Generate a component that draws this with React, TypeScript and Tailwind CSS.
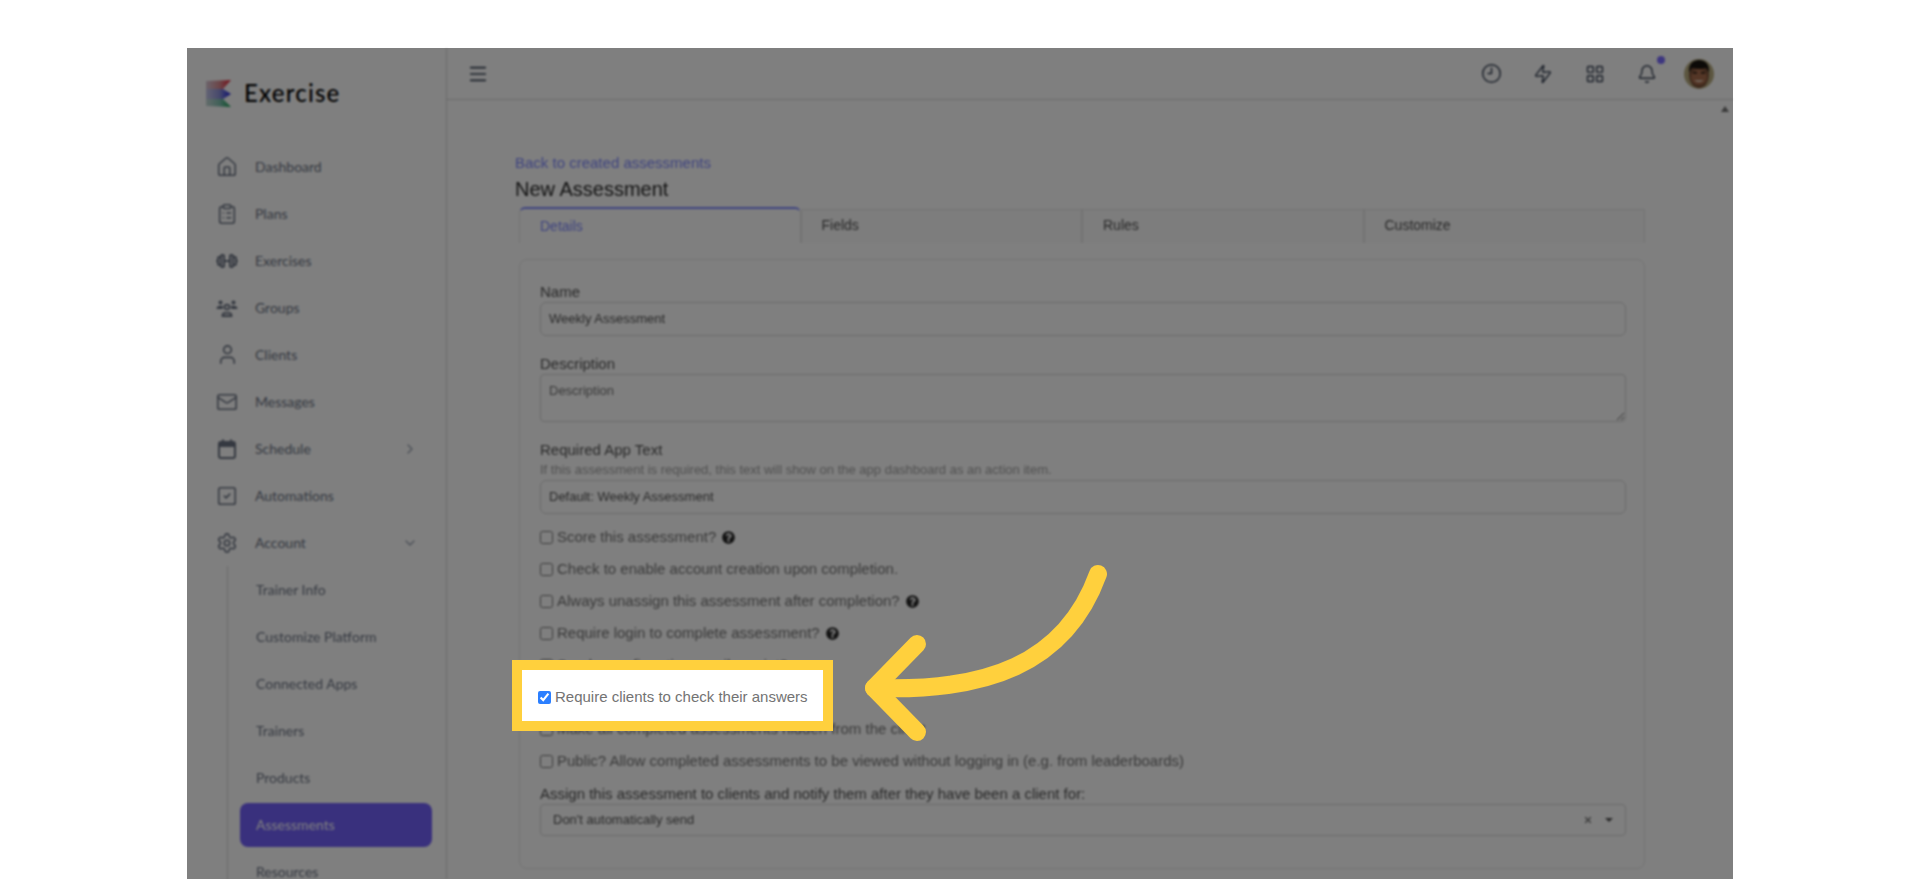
import { Bell, ChevronDown, ChevronRight, ClipboardList, Clock9, House, LayoutGrid, Mail, Menu, Settings, SquareCheck, User, X, Zap } from "lucide-react";
import { FaQuestionCircle } from "react-icons/fa";
import { TbBarbell } from "react-icons/tb";
import type { ReactNode } from "react";

function Logo() {
  return (
    <svg width="27" height="27" viewBox="0 0 27 27">
      <defs>
        <linearGradient id="lr" x1="0" x2="1" y1="0" y2="0">
          <stop offset="0" stopColor="#d8c8d8" />
          <stop offset="0.55" stopColor="#d88a90" />
          <stop offset="1" stopColor="#e81c30" />
        </linearGradient>
        <linearGradient id="lb" x1="0" x2="1" y1="0" y2="0">
          <stop offset="0" stopColor="#c8c8e8" />
          <stop offset="0.55" stopColor="#8c90d8" />
          <stop offset="1" stopColor="#1c20e0" />
        </linearGradient>
        <linearGradient id="lg" x1="0" x2="1" y1="0" y2="0">
          <stop offset="0" stopColor="#c8d8d8" />
          <stop offset="0.55" stopColor="#80c0b0" />
          <stop offset="1" stopColor="#14a050" />
        </linearGradient>
      </defs>
      <polygon points="1,1 26,0 18,9 1,9" fill="url(#lr)" />
      <polygon points="1,9 18,9 26,14 18,19 1,19" fill="url(#lb)" />
      <polygon points="1,19 18,19 26,27 1,26" fill="url(#lg)" />
    </svg>
  );
}

function GroupIcon() {
  return (
    <svg width="26" height="26" viewBox="0 0 24 24" fill="none" stroke="currentColor" strokeWidth="1.8">
      <circle cx="12" cy="11" r="2.4" />
      <path d="M7.500 20v-.5c0-1.600 1.400-2.700 3-2.700h3c1.600 0 3 1.100 3 2.700v.5z" />
      <circle cx="5.500" cy="6.500" r="2" fill="currentColor" stroke="none" />
      <circle cx="18.500" cy="6.500" r="2" fill="currentColor" stroke="none" />
      <path d="M1.500 13c0-2 1.500-3.200 4-3.200 1.300 0 2.400.3 3 1-.6.7-.9 1.400-.9 2.200z" fill="currentColor" stroke="none" />
      <path d="M22.500 13c0-2-1.500-3.200-4-3.200-1.300 0-2.400.3-3 1 .6.7.9 1.400.9 2.200z" fill="currentColor" stroke="none" />
    </svg>
  );
}

function CalendarIcon() {
  return (
    <svg width="24" height="24" viewBox="0 0 24 24" fill="none" stroke="currentColor" strokeWidth="2">
      <rect x="4" y="5" width="16" height="16" rx="2" />
      <path d="M4 7.500a2.500 2.500 0 0 1 2.500-2.500h11a2.500 2.500 0 0 1 2.500 2.500V10H4z" fill="currentColor" stroke="none" />
      <path d="M8 2.500v3M16 2.500v3" />
    </svg>
  );
}

function Avatar() {
  return (
    <svg width="30" height="30" viewBox="0 0 30 30" className="rounded-full">
      <rect width="30" height="30" fill="#b8ac80" />
      <ellipse cx="15" cy="16" rx="10" ry="13" fill="#7a5038" />
      <path d="M5 14C4 4 10 1 15 1s11 3 10 13c-1-3-2-5-4-5-3 1-8 1-12 0-2 0-3 2-4 5z" fill="#181410" />
      <ellipse cx="15" cy="18" rx="8" ry="8" fill="#a86c4c" />
      <rect x="9" y="13" width="4" height="1.500" fill="#201810" />
      <rect x="17" y="13" width="4" height="1.500" fill="#201810" />
      <path d="M10 21c3 2.500 7 2.500 10 0-2 .5-8 .5-10 0z" fill="#f0e0d0" />
    </svg>
  );
}

const rowClass = "flex h-[47px] items-center";

function NavRow({ icon, label, chevron }: { icon: ReactNode; label: string; chevron?: ReactNode }) {
  return (
    <div className={`${rowClass} gap-4 pl-7 pr-7`}>
      <span className="flex w-6 justify-center text-gray-500">{icon}</span>
      <span className="text-sm text-gray-500">{label}</span>
      {chevron && <span className="ml-auto text-gray-400">{chevron}</span>}
    </div>
  );
}

function SubRow({ label }: { label: string }) {
  return (
    <div className={`${rowClass} pl-7`}>
      <span className="text-sm text-gray-500">{label}</span>
    </div>
  );
}

function Sidebar() {
  return (
    <aside className="w-65 shrink-0 border-r border-neutral-300 font-['Lato',sans-serif]">
      <div className="-mb-px flex h-24 items-center gap-3 pb-1.5 pl-4.5">
        <Logo />
        <span className="text-2xl font-medium tracking-wider text-black">Exercise</span>
      </div>
      <NavRow icon={<House size={22} strokeWidth={1.7} />} label="Dashboard" />
      <NavRow icon={<ClipboardList size={22} strokeWidth={1.7} />} label="Plans" />
      <NavRow icon={<TbBarbell size={24} />} label="Exercises" />
      <NavRow icon={<GroupIcon />} label="Groups" />
      <NavRow icon={<User size={23} strokeWidth={1.7} />} label="Clients" />
      <NavRow icon={<Mail size={22} strokeWidth={1.7} />} label="Messages" />
      <NavRow icon={<CalendarIcon />} label="Schedule" chevron={<ChevronRight size={16} />} />
      <NavRow icon={<SquareCheck size={22} strokeWidth={1.7} />} label="Automations" />
      <NavRow icon={<Settings size={22} strokeWidth={1.7} />} label="Account" chevron={<ChevronDown size={16} />} />
      <div className="ml-10 border-l border-neutral-300">
        <SubRow label="Trainer Info" />
        <SubRow label="Customize Platform" />
        <SubRow label="Connected Apps" />
        <SubRow label="Trainers" />
        <SubRow label="Products" />
        <div className={`${rowClass} pl-3`}>
          <div className="flex h-11 w-48 items-center rounded-lg bg-[#7260fa] px-4 text-sm text-white">
            Assessments
          </div>
        </div>
        <SubRow label="Resources" />
      </div>
    </aside>
  );
}

function TopBar() {
  const cell = "relative flex h-full w-13 items-center justify-center";
  return (
    <header className="flex h-13 shrink-0 items-center border-b border-neutral-300 pl-5 pr-2 text-gray-700">
      <Menu size={22} strokeWidth={1.8} />
      <div className="ml-auto flex h-full items-center">
        <div className={cell}><Clock9 size={21} strokeWidth={1.7} /></div>
        <div className={cell}><Zap size={20} strokeWidth={1.7} className="-rotate-6" /></div>
        <div className={cell}><LayoutGrid size={20} strokeWidth={1.7} /></div>
        <div className={cell}>
          <Bell size={20} strokeWidth={1.7} />
          <span className="absolute left-9 top-2 size-2 rounded-full bg-[#7a6cff]" />
        </div>
        <div className={cell}><Avatar /></div>
      </div>
    </header>
  );
}

function CheckRow({ label, help }: { label: string; help?: boolean }) {
  return (
    <label className="flex h-8 items-center gap-1 text-[15px] text-neutral-500">
      <input type="checkbox" />
      <span>{label}</span>
      {help && <FaQuestionCircle size={13} className="ml-0.5 text-neutral-800" />}
    </label>
  );
}

const inputClass = "block h-8.5 w-full rounded-md border border-neutral-300 bg-white px-2 text-[13px] text-neutral-600 outline-none";
const labelClass = "text-[15px] leading-4 text-neutral-600";

function Form() {
  return (
    <div className="mt-4 rounded-lg border border-neutral-200 pb-8 pl-5 pr-4.5 pt-6">
      <div className={labelClass}>Name</div>
      <input readOnly defaultValue="Weekly Assessment" className={`${inputClass} mt-0.5`} />
      <div className={`${labelClass} mt-5`}>Description</div>
      <textarea
        readOnly
        placeholder="Description"
        className="mt-0.5 block h-12 w-full rounded-sm border border-neutral-300 bg-white px-2 py-1.5 text-[13px] text-neutral-600 outline-none placeholder:text-neutral-500"
      />
      <div className={`${labelClass} mt-5`}>Required App Text</div>
      <div className="mt-1 text-[13px] leading-4 text-neutral-400">
        If this assessment is required, this text will show on the app dashboard as an action item.
      </div>
      <input readOnly defaultValue="Default: Weekly Assessment" className={`${inputClass} mt-0.5`} />
      <div className="mt-2">
        <CheckRow label="Score this assessment?" help />
        <CheckRow label="Check to enable account creation upon completion." />
        <CheckRow label="Always unassign this assessment after completion?" help />
        <CheckRow label="Require login to complete assessment?" help />
        <CheckRow label="Send a confirmation email receipt?" />
        <CheckRow label="Require clients to check their answers" />
        <CheckRow label="Make all completed assessments hidden from the client" />
        <CheckRow label="Public? Allow completed assessments to be viewed without logging in (e.g. from leaderboards)" />
      </div>
      <div className={`${labelClass} mt-2`}>
        Assign this assessment to clients and notify them after they have been a client for:
      </div>
      <div className="mt-0.5 flex h-8 items-center rounded-sm border border-neutral-300 pl-3 pr-3 text-[13px] text-neutral-600">
        Don't automatically send
        <X size={10} strokeWidth={3} className="ml-auto text-neutral-500" />
        <span className="ml-3 size-0 border-x-4 border-t-4 border-x-transparent border-t-neutral-600" />
      </div>
    </div>
  );
}

function Tabs() {
  const tab = "mt-0.5 flex items-center border-x border-t border-neutral-200 bg-neutral-50 pb-0.5 pl-5 text-sm text-neutral-600";
  return (
    <div className="mt-1 grid h-9 grid-cols-4">
      <div className="flex items-center rounded-t-md border-x border-t-2 border-x-neutral-200 border-t-indigo-400 pl-5 text-sm text-indigo-400">Details</div>
      <div className={tab}>Fields</div>
      <div className={tab}>Rules</div>
      <div className={tab}>Customize</div>
    </div>
  );
}

export default function App() {
  return (
    <div className="h-screen overflow-hidden bg-white pt-12">
      <div className="relative mx-auto h-full w-[1546px] font-['Liberation_Sans',sans-serif]">
        <div className="flex h-full bg-white blur-[0.8px]">
          <Sidebar />
          <div className="flex min-w-0 flex-1 flex-col">
            <TopBar />
            <div className="flex flex-1">
              <main className="min-w-0 flex-1 pl-17 pr-18 pt-13">
                <div className="text-[15px] text-indigo-400">Back to created assessments</div>
                <h1 className="text-xl text-neutral-800">New Assessment</h1>
                <div className="ml-1">
                  <Tabs />
                  <Form />
                </div>
              </main>
              <div className="flex w-4 justify-center pt-1.5">
                <span className="size-0 border-x-4 border-b-[6px] border-x-transparent border-b-neutral-500" />
              </div>
            </div>
          </div>
        </div>

        {/* dim layer of the walkthrough */}
        <div className="absolute inset-0 bg-black/50" />

        {/* spotlight on the step */}
        <div className="absolute left-[325px] top-[612px] flex h-[71px] w-[321px] items-center gap-1 border-10 border-[#ffd03d] bg-white pl-4 pt-1 text-[15px] text-neutral-500">
          <input type="checkbox" defaultChecked className="accent-blue-500" />
          Require clients to check their answers
        </div>

        <svg className="absolute left-[673px] top-[512px]" width="260" height="190" viewBox="860 560 260 190" fill="none" stroke="#ffd03d" strokeWidth="18" strokeLinecap="round" strokeLinejoin="round">
          <path d="M1098 574C1065 665 985 692 874 688" />
          <path d="M917 644L874 688L917 732" />
        </svg>
      </div>
    </div>
  );
}
